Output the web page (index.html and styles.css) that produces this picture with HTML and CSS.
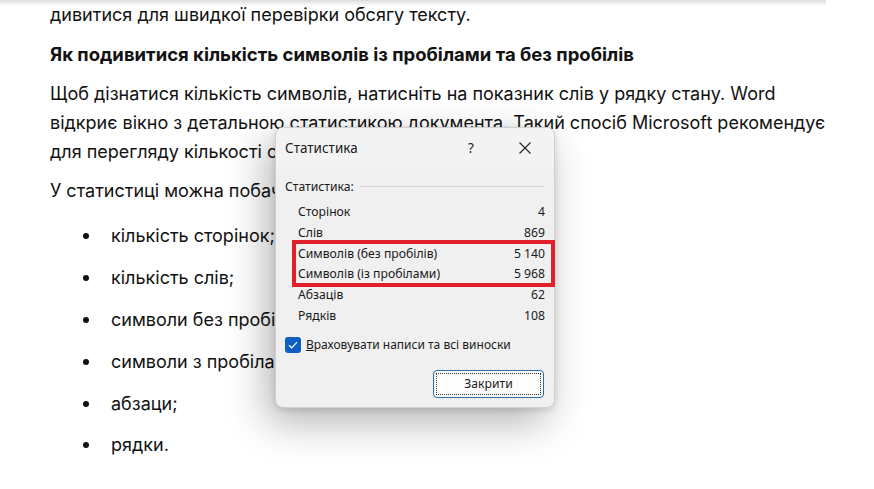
FILE: index.html
```html
<!DOCTYPE html>
<html lang="uk">
<head>
<meta charset="utf-8">
<link rel="stylesheet" href="styles.css">
</head>
<body>
<div class="topshade"></div>
<main class="article">
  <p class="line first">дивитися для швидкої перевірки обсягу тексту.</p>
  <h3 class="heading">Як подивитися кількість символів із пробілами та без пробілів</h3>
  <p class="para">Щоб дізнатися кількість символів, натисніть на показник слів у рядку стану. Word<br>відкриє вікно з детальною статистикою документа. Такий спосіб Microsoft рекомендує<br>для перегляду кількості символів.</p>
  <p class="para intro">У статистиці можна побачити:</p>
  <ul class="list">
    <li>кількість сторінок;</li>
    <li>кількість слів;</li>
    <li>символи без пробілів;</li>
    <li>символи з пробілами;</li>
    <li>абзаци;</li>
    <li>рядки.</li>
  </ul>
</main>

<div class="dialog">
  <div class="titlebar">
    <span class="title">Статистика</span>
    <span class="help">?</span>
    <svg class="close" width="14" height="14" viewBox="0 0 14 14"><path d="M1.5 1.5 L12.5 12.5 M12.5 1.5 L1.5 12.5" stroke="#222" stroke-width="1.1" fill="none"/></svg>
  </div>
  <div class="content">
    <div class="group">
      <span class="glabel">Статистика:</span>
      <span class="gline"></span>
    </div>
    <div class="rows">
      <div class="row"><span>Сторінок</span><span>4</span></div>
      <div class="row"><span>Слів</span><span>869</span></div>
      <div class="row"><span>Символів (без пробілів)</span><span>5 140</span></div>
      <div class="row"><span>Символів (із пробілами)</span><span>5 968</span></div>
      <div class="row"><span>Абзаців</span><span>62</span></div>
      <div class="row"><span>Рядків</span><span>108</span></div>
      <div class="highlight"></div>
    </div>
    <label class="check">
      <span class="box"><svg width="10" height="8" viewBox="0 0 10 8"><path d="M1 4.2 L3.7 6.8 L9 1.2" stroke="#fff" stroke-width="1.2" fill="none"/></svg></span>
      <span class="clabel"><u>В</u>раховувати написи та всі виноски</span>
    </label>
    <div class="actions">
      <button class="btn"><span class="focus">Закрити</span></button>
    </div>
  </div>
</div>
</body>
</html>
```

FILE: styles.css
```css
html, body {
  margin: 0;
  padding: 0;
  background: #fff;
}
body {
  width: 874px;
  height: 489px;
  overflow: hidden;
  position: relative;
  font-family: "Inter", "Roboto", sans-serif;
  color: #121212;
}
.topshade {
  position: absolute;
  left: 0;
  top: 0;
  width: 826px;
  height: 6px;
  background: linear-gradient(#dcdcdc, rgba(255,255,255,0));
}
.article {
  padding: 0 0 0 50px;
  width: 800px;
}
.line, .para, .heading {
  margin: 0;
}
.first {
  font-size: 18px;
  line-height: 29px;
}
.heading {
  font-size: 18.5px;
  font-weight: 700;
  line-height: 24px;
  margin-top: 13px;
}
.para {
  font-size: 18px;
  line-height: 29px;
  margin-top: 13px;
  white-space: nowrap;
}
.intro {
  margin-top: 10px;
}
.list {
  list-style: none;
  margin: 19px 0 0 0;
  padding: 0 0 0 32px;
  font-size: 18px;
  line-height: 24px;
}
.list li {
  display: flex;
  align-items: center;
  margin-bottom: 17.9px;
}
.list li::before {
  content: "";
  width: 6px;
  height: 6px;
  border-radius: 50%;
  background: #121212;
  margin-right: 22px;
  margin-left: 1px;
}

.dialog {
  position: absolute;
  left: 275px;
  top: 127px;
  width: 280px;
  height: 281px;
  background: #f0f0f0;
  border: 1px solid #cfcfcf;
  box-sizing: border-box;
  border-radius: 8px;
  box-shadow: -8px 14px 40px rgba(0,0,0,0.3), 0 2px 6px rgba(0,0,0,0.12);
  font-family: "Noto Sans", "Open Sans", sans-serif;
  font-size: 12.2px;
  color: #1a1a1a;
}
.titlebar {
  display: flex;
  align-items: center;
  height: 40px;
  padding: 0 0 0 9px;
  background: #f3f3f3;
  border-radius: 8px 8px 0 0;
}
.title {
  font-size: 13.5px;
  flex: 1;
}
.help {
  font-size: 13.5px;
  width: 20px;
  text-align: center;
  margin-right: 37px;
}
.close {
  margin-right: 22px;
}
.content {
  padding: 10px 9px 0 9px;
}
.group {
  display: flex;
  align-items: center;
  height: 17px;
}
.gline {
  flex: 1;
  height: 1px;
  background: #d6d6d6;
  margin-left: 6px;
}
.rows {
  position: relative;
  padding: 7px 0 0 13px;
}
.row {
  display: flex;
  justify-content: space-between;
  height: 20.8px;
  line-height: 20.8px;
}
.highlight {
  position: absolute;
  left: 7px;
  top: 45px;
  width: 263px;
  height: 47px;
  border: 4px solid #e1202b;
  box-sizing: border-box;
}
.check {
  display: flex;
  align-items: center;
  margin-top: 9px;
  height: 18px;
}
.box {
  width: 16px;
  height: 16px;
  border-radius: 3px;
  background: #0f5fc3;
  display: flex;
  align-items: center;
  justify-content: center;
  margin-right: 5px;
}
.clabel {
  font-size: 12px;
}
.actions {
  display: flex;
  justify-content: flex-end;
  margin-top: 16px;
  padding-right: 1px;
}
.btn {
  width: 111px;
  height: 28px;
  background: #fdfdfd;
  border: 1px solid #2b6ea8;
  border-radius: 4px;
  padding: 2px;
  box-sizing: border-box;
  font-family: inherit;
  font-size: 12.2px;
  color: #1a1a1a;
  display: flex;
}
.focus {
  flex: 1;
  border: 1px dotted #333;
  display: flex;
  align-items: center;
  justify-content: center;
}
```
